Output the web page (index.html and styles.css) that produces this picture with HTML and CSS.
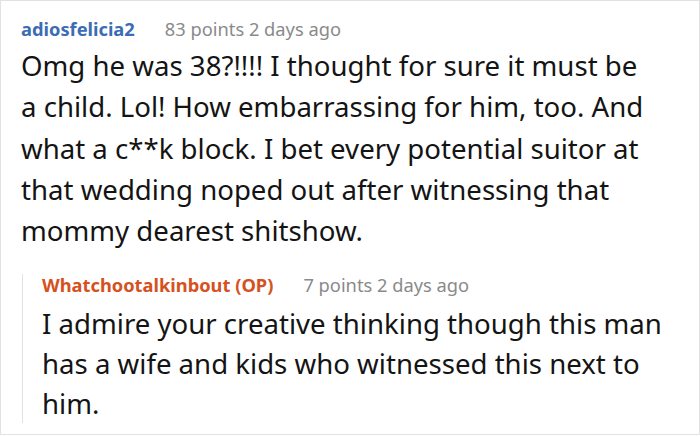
FILE: index.html
```html
<!DOCTYPE html>
<html>
<head>
<meta charset="utf-8">
<link rel="stylesheet" href="styles.css">
</head>
<body>
<div class="card">
  <div class="comment">
    <div class="meta"><span class="user">adiosfelicia2</span><span class="info">83 points 2 days ago</span></div>
    <p class="text">Omg he was 38?!!!! I thought for sure it must be a child. Lol! How embarrassing for him, too. And what a c**k block. I bet every potential suitor at that wedding noped out after witnessing that mommy dearest shitshow.</p>
  </div>
  <div class="reply">
    <div class="meta"><span class="user op">Whatchootalkinbout (OP)</span><span class="info">7 points 2 days ago</span></div>
    <p class="text">I admire your creative thinking though this man has a wife and kids who witnessed this next to him.</p>
  </div>
</div>
</body>
</html>
```

FILE: styles.css
```css
html, body { margin: 0; padding: 0; background: #fff; }
body { font-family: "Noto Sans", "Open Sans", sans-serif; }
.card {
  width: 700px;
  height: 435px;
  box-sizing: border-box;
  border: 1px solid #e2e2e2;
  padding: 17px 24px 0 20px;
}
.comment { padding-right: 17px; }
.meta { display: flex; align-items: baseline; font-size: 18.3px; line-height: 22px; white-space: nowrap; }
.user { font-weight: 700; color: #3b6cb4; }
.user.op { color: #d5521f; }
.info { color: #8a8a8a; margin-left: 30px; }
.text { margin: 5px 0 0 0; font-size: 27.6px; line-height: 41.3px; color: #141414; }
.reply {
  margin-top: 31px;
  margin-left: 1px;
  border-left: 1px solid #e2e2e2;
  padding-left: 19px;
}
.reply .meta { margin-top: -8px; }
.reply .text { margin-top: 7px; margin-bottom: -7px; line-height: 40px; }
```
